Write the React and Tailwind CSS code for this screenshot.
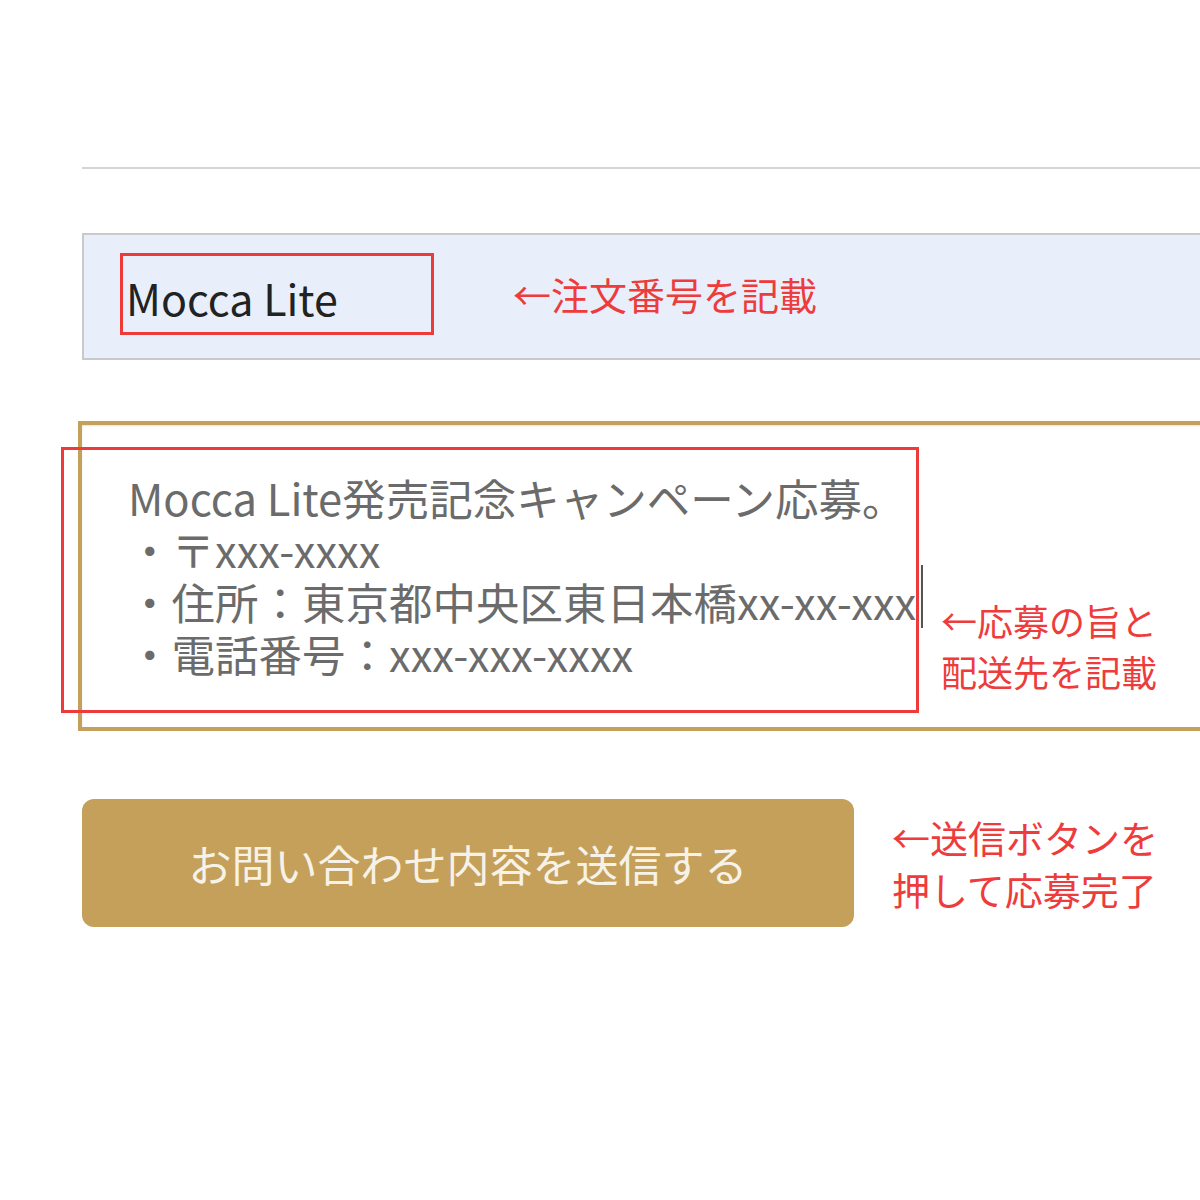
export default function App() {
  const lines = [
    "Mocca Lite発売記念キャンペーン応募。",
    "・〒xxx-xxxx",
    "・住所：東京都中央区東日本橋xx-xx-xxx",
    "・電話番号：xxx-xxx-xxxx",
  ];

  return (
    <div className="w-[1200px] h-[1200px] bg-white overflow-hidden font-['Noto_Sans_CJK_JP','Noto_Sans',sans-serif]">
      <div className="pl-[82px] pt-[167px]">
        {/* divider */}
        <div className="w-[1200px] h-[2px] bg-[#d4d4d4]" />

        {/* order number field */}
        <div className="relative mt-[64px] w-[1200px] h-[127px] border-2 border-[#c9c9c9] bg-[#e8effb] flex items-center pl-[42px]">
          <span className="text-[43px] leading-[52px] text-[#222]">Mocca Lite</span>
          <div className="absolute left-[36px] top-[18px] w-[314px] h-[82px] border-[3px] border-[#ef3a3a]" />
          <div className="absolute left-[429px] top-[33px] text-[38px] leading-[52px] text-[#ee3b3b] whitespace-nowrap">
            ←注文番号を記載
          </div>
        </div>

        {/* message field */}
        <div className="relative mt-[61px] -ml-[4px] w-[1200px] h-[310px] border-4 border-[#c4a15a] bg-white pt-[47px] pl-[46px] shadow-[inset_0_1px_2px_rgba(0,0,0,0.12)]">
          {lines.map((l) => (
            <div key={l} className="text-[43.5px] leading-[52px] text-[#6b6b6b] whitespace-nowrap">
              {l}
            </div>
          ))}
          <div className="absolute left-[839px] top-[140px] w-[2px] h-[63px] bg-[#555]" />
          <div className="absolute -left-[21px] top-[22px] w-[858px] h-[266px] border-[3px] border-[#ef3a3a]" />
          <div className="absolute left-[859px] top-[170px] text-[36px] leading-[51px] text-[#ee3b3b] whitespace-nowrap">
            ←応募の旨と
            <br />
            配送先を記載
          </div>
        </div>

        {/* submit */}
        <div className="mt-[68px] flex items-center gap-[38px]">
          <button className="w-[772px] h-[128px] rounded-[12px] bg-[#c4a05a] text-[43px] text-[#f7f2e8] flex items-center justify-center">
            お問い合わせ内容を送信する
          </button>
          <div className="text-[38px] leading-[52px] text-[#ee3b3b] whitespace-nowrap">
            ←送信ボタンを
            <br />
            押して応募完了
          </div>
        </div>
      </div>
    </div>
  );
}
